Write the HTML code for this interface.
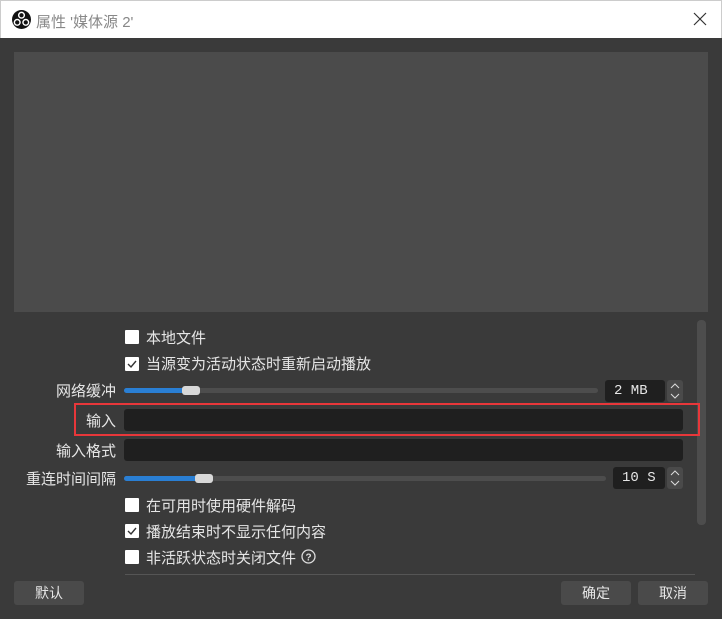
<!DOCTYPE html>
<html><head><meta charset="utf-8"><style>
*{margin:0;padding:0;box-sizing:border-box}
body{width:722px;height:619px;background:#3a3a3a;font-family:"Liberation Sans","Noto Sans CJK SC",sans-serif;font-size:15px;color:#e6e6e6;position:relative;overflow:hidden}
.a{position:absolute}
.title{left:0;top:0;width:722px;height:38px;background:#fff;border:1px solid #ccc;border-bottom:none}
.cb{width:14px;height:14px;background:#fff;border-radius:1px}
.lbl{text-align:right;width:116px;left:0}
.inp{background:#1f1f1f;border-radius:3px}
.btn{background:#4a4a4a;border-radius:3px;text-align:center;line-height:24px;font-size:14px}
.track{height:5px;background:#4d4d4d;border-radius:3px}
.fill{height:5px;background:#2a7fd4;border-radius:3px}
.knob{width:18px;height:9px;background:#d8d8d8;border-radius:3px}
.spin{background:#4a4a4a;border-radius:3px;width:16px;height:22px}
.mono{font-family:"Liberation Mono",monospace;font-size:14px}
</style></head><body>
<div class="a title">
 <svg class="a" style="left:11px;top:9px" width="19" height="19" viewBox="0 0 20 20"><circle cx="10" cy="10" r="10" fill="#111"/><circle cx="10" cy="5.5" r="3" fill="none" stroke="#fff" stroke-width="1.5"/><circle cx="5.5" cy="13" r="3" fill="none" stroke="#fff" stroke-width="1.5"/><circle cx="14.5" cy="13" r="3" fill="none" stroke="#fff" stroke-width="1.5"/></svg>
 <div class="a" style="left:35px;top:10px;color:#888;font-size:15px">属性 '媒体源 2'</div>
 <svg class="a" style="left:692px;top:11px" width="14" height="14"><path d="M1 1L13 13M13 1L1 13" stroke="#333" stroke-width="1.2"/></svg>
</div>
<div class="a" style="left:14px;top:52px;width:694px;height:260px;background:#4b4b4b"></div>
<div class="a" style="left:697px;top:320px;width:9px;height:205px;background:#4d4d4d;border-radius:4px"></div>

<div class="a cb" style="left:125px;top:330px"></div><div class="a" style="left:146px;top:327px">本地文件</div>
<div class="a cb" style="left:125px;top:357px"><svg width="14" height="14"><path d="M3 7l3 3 5-6" stroke="#333" stroke-width="1.4" fill="none"/></svg></div><div class="a" style="left:146px;top:353px">当源变为活动状态时重新启动播放</div>

<div class="a lbl" style="top:380px">网络缓冲</div>
<div class="a track" style="left:124px;top:388px;width:474px"></div>
<div class="a fill" style="left:124px;top:388px;width:62px"></div>
<div class="a knob" style="left:182px;top:386px"></div>
<div class="a inp mono" style="left:605px;top:380px;width:60px;height:22px;line-height:22px;padding-left:9px">2 MB</div>
<div class="a spin" style="left:667px;top:380px"><svg width="16" height="22"><path d="M4 8l4-4 4 4M4 14l4 4 4-4" stroke="#ddd" fill="none"/></svg></div>

<div class="a" style="left:74px;top:403px;width:626px;height:33px;border:2px solid #e8373a"></div>
<div class="a lbl" style="top:410px">输入</div>
<div class="a inp" style="left:124px;top:409px;width:559px;height:22px"></div>
<div class="a lbl" style="top:440px">输入格式</div>
<div class="a inp" style="left:124px;top:439px;width:559px;height:22px"></div>

<div class="a lbl" style="top:468px">重连时间间隔</div>
<div class="a track" style="left:124px;top:476px;width:482px"></div>
<div class="a fill" style="left:124px;top:476px;width:75px"></div>
<div class="a knob" style="left:195px;top:474px"></div>
<div class="a inp mono" style="left:613px;top:467px;width:52px;height:22px;line-height:22px;padding-left:9px">10 S</div>
<div class="a spin" style="left:667px;top:467px"><svg width="16" height="22"><path d="M4 8l4-4 4 4M4 14l4 4 4-4" stroke="#ddd" fill="none"/></svg></div>

<div class="a cb" style="left:125px;top:498px"></div><div class="a" style="left:146px;top:495px">在可用时使用硬件解码</div>
<div class="a cb" style="left:125px;top:524px"><svg width="14" height="14"><path d="M3 7l3 3 5-6" stroke="#333" stroke-width="1.4" fill="none"/></svg></div><div class="a" style="left:146px;top:521px">播放结束时不显示任何内容</div>
<div class="a cb" style="left:125px;top:550px"></div><div class="a" style="left:146px;top:547px">非活跃状态时关闭文件</div>
<svg class="a" style="left:301px;top:549px" width="15" height="15"><circle cx="7.5" cy="7.5" r="6.5" fill="none" stroke="#ddd" stroke-width="1.3"/><text x="7.5" y="11.5" font-size="10" text-anchor="middle" fill="#ddd" font-family="Liberation Sans" font-weight="bold">?</text></svg>
<div class="a" style="left:125px;top:574px;width:570px;height:1px;background:#555"></div>

<div class="a btn" style="left:14px;top:581px;width:70px">默认</div>
<div class="a btn" style="left:561px;top:581px;width:70px">确定</div>
<div class="a btn" style="left:638px;top:581px;width:70px">取消</div>
</body></html>
